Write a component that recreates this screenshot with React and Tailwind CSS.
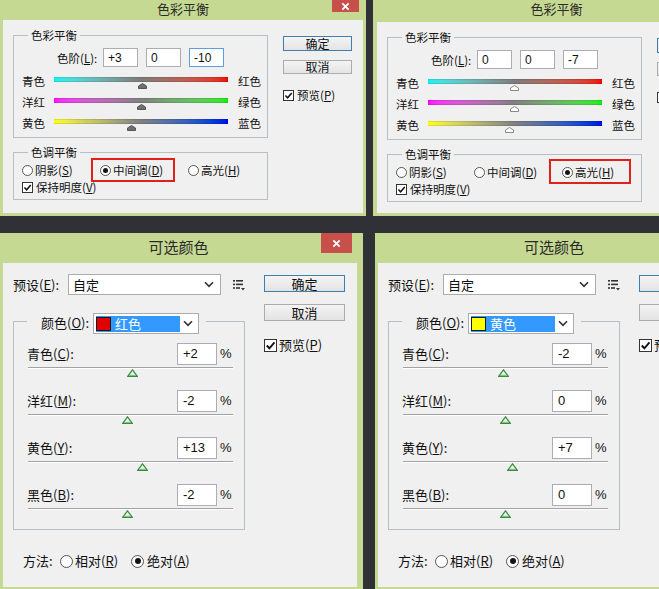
import React from "react";

// 四个 Photoshop 对话框截图拼在一起：色彩平衡 ×2，可选颜色 ×2

const Key = ({ label, k, colon }) => (
  <>
    {label}(<u>{k}</u>){colon ? ":" : ""}
  </>
);

function Radio({ on, big }) {
  return (
    <span
      className={`${big ? "w-[13px] h-[13px]" : "w-[11px] h-[11px]"} shrink-0 rounded-full border border-[#555] bg-white flex items-center justify-center`}
    >
      {on && <span className={`${big ? "w-[6px] h-[6px]" : "w-[5px] h-[5px]"} rounded-full bg-[#151515]`} />}
    </span>
  );
}

function Check({ big }) {
  return (
    <span
      className={`${big ? "w-[13px] h-[13px]" : "w-[11px] h-[11px]"} shrink-0 border border-[#333] bg-white flex items-center justify-center`}
    >
      <svg viewBox="0 0 10 10" className="w-full h-full">
        <path d="M1.6 5 L4 7.5 L8.6 2.2" fill="none" stroke="#111" strokeWidth="1.7" />
      </svg>
    </span>
  );
}

function CloseBtn({ className }) {
  return (
    <div className={`bg-[#c8504b] flex items-center justify-center text-white ${className}`}>
      <svg viewBox="0 0 10 10" className="w-[9px] h-[9px]">
        <path d="M1.5 1.5 L8.5 8.5 M8.5 1.5 L1.5 8.5" stroke="#fff" strokeWidth="2" />
      </svg>
    </div>
  );
}

function TopThumb({ filled, pos }) {
  return (
    <svg viewBox="0 0 9 6" className={`w-[9px] h-[6px] mt-[1px] ${pos}`}>
      <path
        d="M4.5 0.5 L8.5 3 L8.5 5.5 L0.5 5.5 L0.5 3 Z"
        fill={filled ? "#6f6f6f" : "#fff"}
        stroke={filled ? "#555" : "#8a8a8a"}
        strokeWidth="1"
      />
    </svg>
  );
}

function GreenThumb({ pos }) {
  return (
    <svg viewBox="0 0 11 8" className={`w-[11px] h-[8px] ${pos}`}>
      <path d="M5.5 0.8 L10.3 7.3 L0.7 7.3 Z" fill="#eaf6ea" stroke="#3a8a3e" strokeWidth="1.2" />
      <path d="M2.2 6.4 L8.8 6.4" stroke="#7cc47f" strokeWidth="1.2" />
    </svg>
  );
}

function TopButton({ children, primary, className }) {
  return (
    <div
      className={`w-[69px] flex items-center justify-center text-[12px] leading-none border bg-linear-to-b from-[#f4f4f4] to-[#e4e4e4] ${primary ? "border-[#3c7fb1]" : "border-[#acacac]"} ${className}`}
    >
      {children}
    </div>
  );
}

function TrackRow({ left, right, grad, pos, filled }) {
  return (
    <div className="flex h-[21px] items-start">
      <span className="w-[32px] leading-[14px]">{left}</span>
      <div className="w-[174px] flex flex-col">
        <div className={`mt-[3px] h-[5px] border-y border-black/10 ${grad}`} />
        <TopThumb filled={filled} pos={pos} />
      </div>
      <span className="ml-[10px] leading-[14px]">{right}</span>
    </div>
  );
}

function ColorBalance({ levels, thumbs, filled, tone, titleH, frame, focusLast, boxMid, boxHigh, close }) {
  const items = [
    { key: "low", label: "阴影", k: "S", w: "w-[78px]" },
    { key: "mid", label: "中间调", k: "D", w: "w-[88px]" },
    { key: "high", label: "高光", k: "H", w: "w-[60px]" },
  ];
  return (
    <div className={`shrink-0 w-[366px] h-[216px] bg-[#c6d993] flex flex-col ${frame}`}>
      <div className={`grid grid-cols-[1fr_auto_1fr] ${titleH}`}>
        <div />
        <div className="text-[13px] leading-[17px] text-[#2a2a2a]">色彩平衡</div>
        <div className="flex justify-end pr-[4px]">{close && <CloseBtn className="w-[27px] h-[12px]" />}</div>
      </div>
      <div className="flex-1 mb-[3px] bg-[#f0f0f0] flex text-[11.5px]">
        <div className="ml-[10px] mt-[8px] w-[255px] flex flex-col">
          <fieldset className="border border-[#b9bec4] pl-[8px] pr-[2px] h-[110px]">
            <legend className="ml-[6px] px-[3px] leading-[14px]">色彩平衡</legend>
            <div className="flex items-center mt-[6px]">
              <span className="ml-[35px] w-[46px] leading-[14px]">
                <Key label="色阶" k="L" colon />
              </span>
              <div className="flex gap-[8px]">
                {levels.map((v, i) => (
                  <div
                    key={i}
                    className={`w-[35px] h-[19px] bg-white border pl-[4px] flex items-center text-[12px] font-['Liberation_Sans',sans-serif] ${focusLast && i === 2 ? "border-[#5b9fe0]" : "border-[#abadb3]"}`}
                  >
                    {v}
                  </div>
                ))}
              </div>
            </div>
            <div className="mt-[7px] flex flex-col">
              <TrackRow left="青色" right="红色" grad="bg-linear-to-r from-[#00f2f2] via-[#7c7c7c] to-[#f00000]" pos={thumbs[0]} filled={filled} />
              <TrackRow left="洋红" right="绿色" grad="bg-linear-to-r from-[#ff00ff] via-[#808080] to-[#00f000]" pos={thumbs[1]} filled={filled} />
              <TrackRow left="黄色" right="蓝色" grad="bg-linear-to-r from-[#ffff00] via-[#808080] to-[#0000e8]" pos={thumbs[2]} filled={filled} />
            </div>
          </fieldset>
          <fieldset className="mt-[7px] border border-[#b9bec4] pl-[8px] pr-[2px] h-[55px]">
            <legend className="ml-[6px] px-[3px] leading-[14px]">色调平衡</legend>
            <div className="mt-[4px] flex items-center h-[14px]">
              {items.map((it) => (
                <div key={it.key} className={`${it.w} shrink-0 flex`}>
                  <div className="relative flex items-center gap-[2px] leading-[14px]">
                    <Radio on={tone === it.key} />
                    <span>
                      <Key label={it.label} k={it.k} />
                    </span>
                    {tone === it.key && (
                      <span className={`absolute border-2 border-[#e0201b] ${it.key === "mid" ? boxMid : boxHigh}`} />
                    )}
                  </div>
                </div>
              ))}
            </div>
            <div className="mt-[3px] flex items-center gap-[3px] h-[14px] leading-[14px]">
              <Check />
              <span>
                <Key label="保持明度" k="V" />
              </span>
            </div>
          </fieldset>
        </div>
        <div className="ml-[15px] mt-[16px] flex flex-col">
          <TopButton primary className="h-[15px]">确定</TopButton>
          <TopButton className="h-[14px] mt-[9px]">取消</TopButton>
          <div className="mt-[14px] flex items-center gap-[3px] h-[14px] leading-[14px]">
            <Check />
            <span>
              <Key label="预览" k="P" />
            </span>
          </div>
        </div>
      </div>
    </div>
  );
}

function Chevron() {
  return (
    <svg viewBox="0 0 10 7" className="w-[10px] h-[7px]">
      <path d="M1 1.2 L5 5.4 L9 1.2" fill="none" stroke="#333" strokeWidth="1.6" />
    </svg>
  );
}

function MenuIcon() {
  return (
    <svg viewBox="0 0 12 12" className="w-[12px] h-[12px]">
      <rect x="0" y="1" width="2" height="1.6" fill="#333" />
      <rect x="3" y="1" width="7" height="1.6" fill="#333" />
      <rect x="0" y="4.6" width="2" height="1.6" fill="#333" />
      <rect x="3" y="4.6" width="7" height="1.6" fill="#333" />
      <rect x="0" y="8.2" width="2" height="1.6" fill="#333" />
      <rect x="3" y="8.2" width="4" height="1.6" fill="#333" />
      <path d="M8 9 L12 9 L10 11.5 Z" fill="#333" />
    </svg>
  );
}

function BigButton({ children, primary, className }) {
  return (
    <div
      className={`w-[81px] h-[17px] flex items-center justify-center text-[13px] leading-none border bg-linear-to-b from-[#f4f4f4] to-[#e3e3e3] ${primary ? "border-[#3c7fb1]" : "border-[#acacac]"} ${className}`}
    >
      {children}
    </div>
  );
}

function SelectiveColor({ swatch, colorName, rows, width, close }) {
  return (
    <div className={`shrink-0 h-[356px] bg-[#c6d993] flex flex-col pl-[3px] ${width}`}>
      <div className="grid grid-cols-[1fr_auto_1fr] h-[30px] -ml-[3px]">
        <div />
        <div className="pt-[5px] text-[15px] leading-[18px] text-[#2a2a2a]">可选颜色</div>
        <div className="flex justify-end pr-[5px]">{close && <CloseBtn className="w-[31px] h-[20px]" />}</div>
      </div>
      <div className="flex-1 mb-[2px] bg-[#f0f0f0] flex text-[13px] leading-[16px]">
        <div className="ml-[10px] w-[232px] flex flex-col">
          <div className="mt-[11px] flex items-center h-[21px]">
            <span className="w-[55px]">
              <Key label="预设" k="E" colon />
            </span>
            <div className="w-[153px] h-[21px] bg-white border border-[#acacac] flex items-center pl-[4px] pr-[6px]">
              <span className="flex-1">自定</span>
              <Chevron />
            </div>
            <div className="ml-[12px]">
              <MenuIcon />
            </div>
          </div>
          <fieldset className="mt-[18px] border border-[#b9bec4] pl-[13px] pr-[11px] h-[217px]">
            <legend className="pl-[14px] pr-[7px] h-[16px]">
              <div className="flex items-start">
                <span className="w-[52px] pt-[2px]">
                  <Key label="颜色" k="O" colon />
                </span>
                <div className="w-[106px] h-[21px] bg-white border border-[#acacac] flex items-center pl-[2px] pr-[5px]">
                  <div className="w-[84px] h-[16px] bg-[#3399ff] flex items-center">
                    <span className={`w-[15px] h-[14px] border border-[#1c1c1c] ${swatch}`} />
                    <span className="ml-[4px] text-white">{colorName}</span>
                  </div>
                  <span className="flex-1" />
                  <Chevron />
                </div>
              </div>
            </legend>
            <div className="pt-[14px] flex flex-col">
              {rows.map((r, i) => (
                <div key={i} className={`flex flex-col ${i < rows.length - 1 ? "mb-[13px]" : ""}`}>
                  <div className="flex items-center h-[22px]">
                    <span className="flex-1">
                      <Key label={r.label} k={r.k} colon />
                    </span>
                    <div className="w-[40px] h-[22px] bg-white border border-[#abadb3] pl-[5px] flex items-center font-['Liberation_Sans',sans-serif]">
                      {r.value}
                    </div>
                    <span className="ml-[3px] w-[13px] font-['Liberation_Sans',sans-serif]">%</span>
                  </div>
                  <div className="mt-[2px] ml-[1px] h-[2px] bg-[#a2a2a2] border-b border-white" />
                  <GreenThumb pos={r.pos} />
                </div>
              ))}
            </div>
          </fieldset>
          <div className="mt-[23px] pl-[10px] flex items-center h-[16px]">
            <span className="w-[37px]">方法:</span>
            <div className="w-[71px] flex items-center gap-[2px]">
              <Radio big />
              <span>
                <Key label="相对" k="R" />
              </span>
            </div>
            <div className="flex items-center gap-[3px]">
              <Radio big on />
              <span>
                <Key label="绝对" k="A" />
              </span>
            </div>
          </div>
        </div>
        <div className="ml-[19px] flex flex-col">
          <BigButton primary className="mt-[12px]">确定</BigButton>
          <BigButton className="mt-[12px]">取消</BigButton>
          <div className="mt-[17px] flex items-center gap-[2px] h-[14px]">
            <Check big />
            <span>
              <Key label="预览" k="P" />
            </span>
          </div>
        </div>
      </div>
    </div>
  );
}

export default function App() {
  return (
    <div className="w-[659px] h-[589px] overflow-hidden whitespace-nowrap bg-[#2f3136] flex flex-col gap-[17px] text-[#111] font-['Noto_Sans_CJK_SC',sans-serif]">
      <div className="flex gap-[7px] h-[216px]">
        <ColorBalance
          levels={["+3", "0", "-10"]}
          thumbs={["ml-[84px]", "ml-[83px]", "ml-[73px]"]}
          filled
          tone="mid"
          titleH="h-[20px]"
          frame="px-[3px]"
          focusLast
          boxMid="-left-[9px] -right-[12px] -top-[5px] -bottom-[5px]"
          close
        />
        <ColorBalance
          levels={["0", "0", "-7"]}
          thumbs={["ml-[82px]", "ml-[82px]", "ml-[77px]"]}
          tone="high"
          titleH="h-[22px]"
          frame="pl-[4px] pr-[3px]"
          boxHigh="-left-[13px] -right-[17px] -top-[6px] -bottom-[5px]"
        />
      </div>
      <div className="flex gap-[12px] h-[356px]">
        <SelectiveColor
          width="w-[363px] pr-[6px]"
          swatch="bg-[#e00000]"
          colorName="红色"
          close
          rows={[
            { label: "青色", k: "C", value: "+2", pos: "ml-[100px]" },
            { label: "洋红", k: "M", value: "-2", pos: "ml-[95px]" },
            { label: "黄色", k: "Y", value: "+13", pos: "ml-[110px]" },
            { label: "黑色", k: "B", value: "-2", pos: "ml-[95px]" },
          ]}
        />
        <SelectiveColor
          width="w-[364px] pr-[6px]"
          swatch="bg-[#ffff00]"
          colorName="黄色"
          rows={[
            { label: "青色", k: "C", value: "-2", pos: "ml-[96px]" },
            { label: "洋红", k: "M", value: "0", pos: "ml-[98px]" },
            { label: "黄色", k: "Y", value: "+7", pos: "ml-[105px]" },
            { label: "黑色", k: "B", value: "0", pos: "ml-[98px]" },
          ]}
        />
      </div>
    </div>
  );
}
